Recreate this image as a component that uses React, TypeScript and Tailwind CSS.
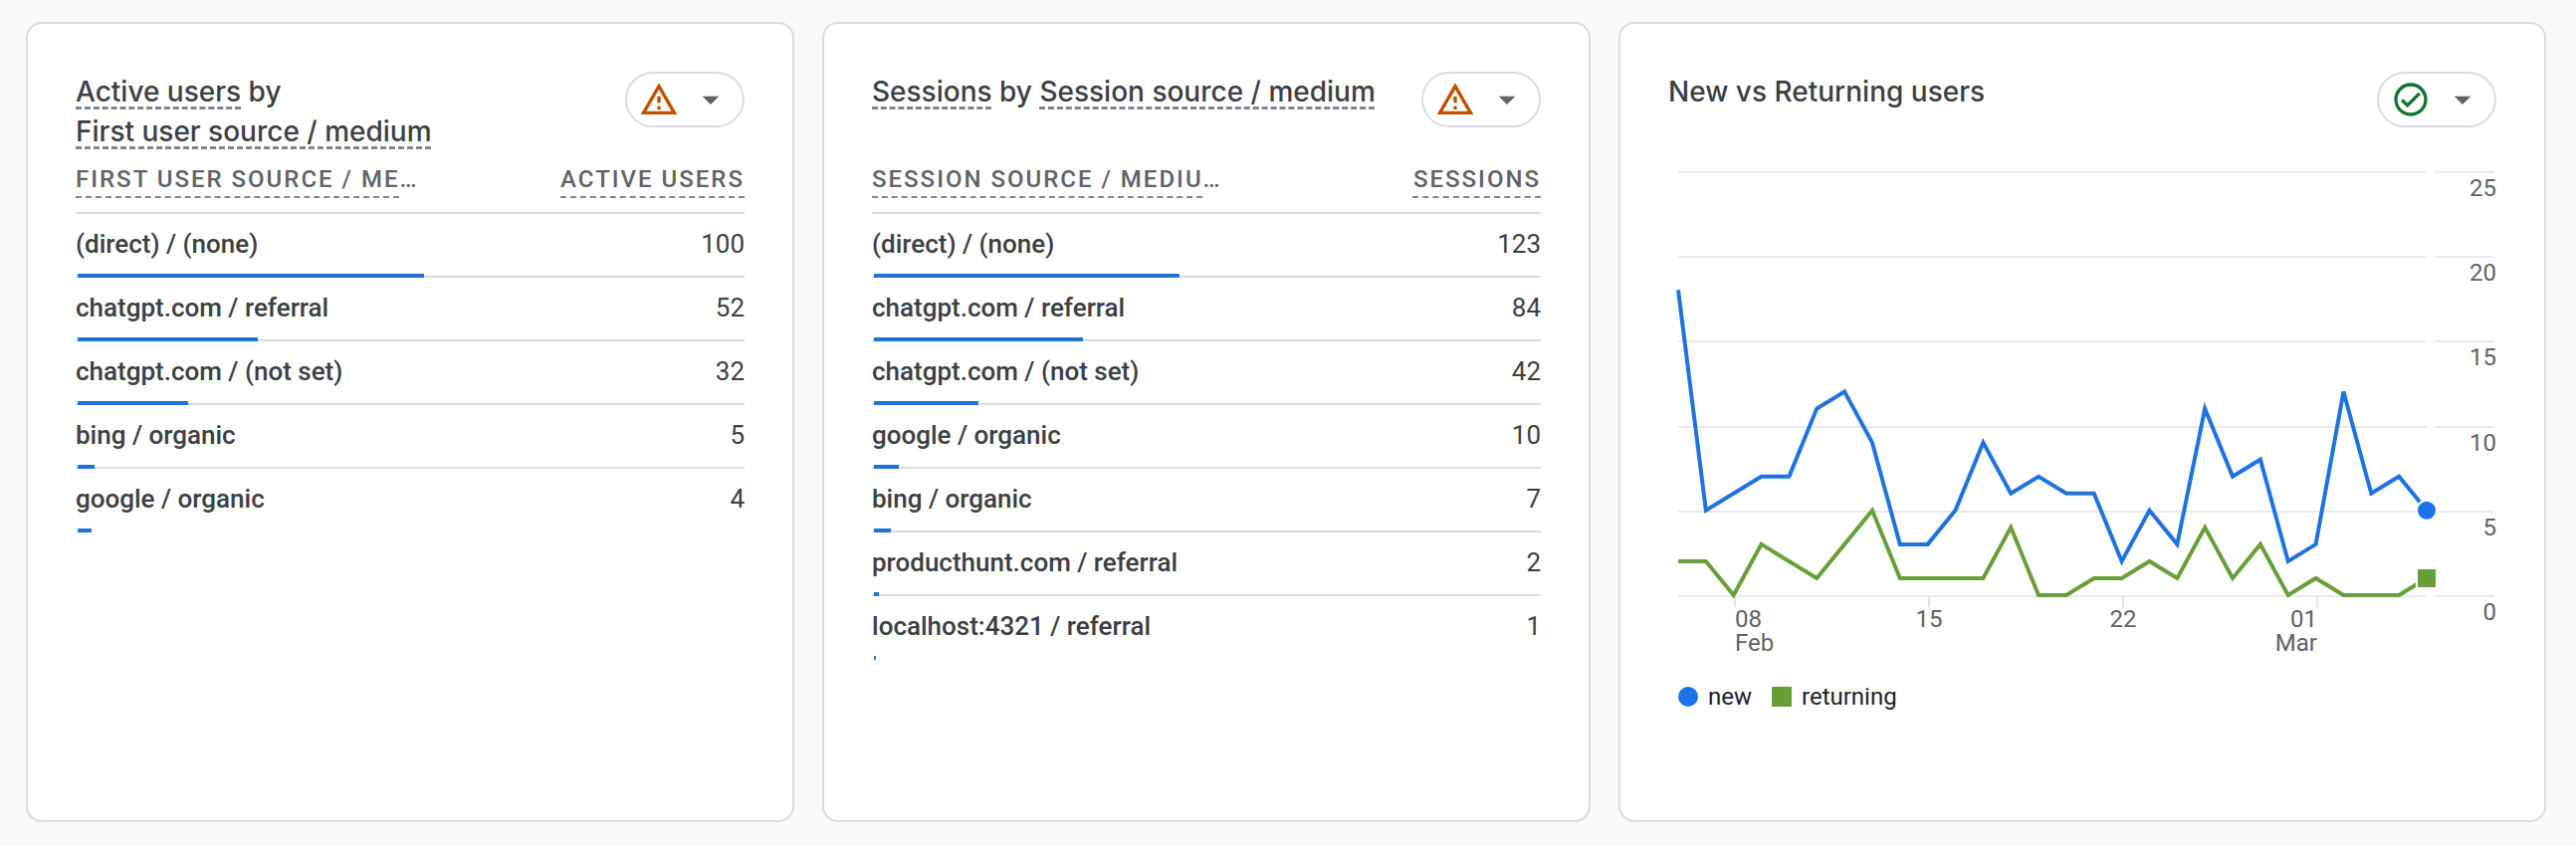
import type { ReactNode } from "react";

interface ISourceRow {
  source: string;
  count: number;
}

interface ISourceTableProps {
  sourceLabel: string;
  countLabel: string;
  rows: ISourceRow[];
}

const firstUserRows: ISourceRow[] = [
  { source: "(direct) / (none)", count: 100 },
  { source: "chatgpt.com / referral", count: 52 },
  { source: "chatgpt.com / (not set)", count: 32 },
  { source: "bing / organic", count: 5 },
  { source: "google / organic", count: 4 },
];

const sessionRows: ISourceRow[] = [
  { source: "(direct) / (none)", count: 123 },
  { source: "chatgpt.com / referral", count: 84 },
  { source: "chatgpt.com / (not set)", count: 42 },
  { source: "google / organic", count: 10 },
  { source: "bing / organic", count: 7 },
  { source: "producthunt.com / referral", count: 2 },
  { source: "localhost:4321 / referral", count: 1 },
];

// one value per day, 6 Feb to 5 Mar
const newUsers = [18, 5, 6, 7, 7, 11, 12, 9, 3, 3, 5, 9, 6, 7, 6, 6, 2, 5, 3, 11, 7, 8, 2, 3, 12, 6, 7, 5];
const returningUsers = [2, 2, 0, 3, 2, 1, 3, 5, 1, 1, 1, 1, 4, 0, 0, 1, 1, 2, 1, 4, 1, 3, 0, 1, 0, 0, 0, 1];

const PLOT_LEFT = 10;
const PLOT_RIGHT = 762;
const PLOT_TOP = 20;
const PLOT_BOTTOM = 446;
const Y_MAX = 25;

const xAt = (day: number) => PLOT_LEFT + (day * (PLOT_RIGHT - PLOT_LEFT)) / (newUsers.length - 1);
const yAt = (value: number) => PLOT_BOTTOM - (value * (PLOT_BOTTOM - PLOT_TOP)) / Y_MAX;
const toPoints = (values: number[]) => values.map((v, i) => `${xAt(i)},${yAt(v)}`).join(" ");

const WarningIcon = () => (
  <svg viewBox="0 0 24 24" className="size-10 fill-[#c05000]" aria-hidden="true">
    <path d="M12 5.99L19.53 19H4.47L12 5.99M12 2L1 21h22L12 2zm1 14h-2v2h2v-2zm0-6h-2v4h2v-4z" />
  </svg>
);

const CheckIcon = () => (
  <svg viewBox="0 0 24 24" className="size-10 fill-[#137333]" aria-hidden="true">
    <path d="M12 2C6.48 2 2 6.48 2 12s4.48 10 10 10 10-4.48 10-10S17.52 2 12 2zm0 18c-4.41 0-8-3.59-8-8s3.59-8 8-8 8 3.59 8 8-3.59 8-8 8zm4.59-12.42L10 14.17l-2.59-2.58L6 13l4 4 8-8-1.41-1.42z" />
  </svg>
);

const StatusButton = ({ label, icon }: { label: string; icon: ReactNode }) => (
  <button
    type="button"
    aria-label={label}
    className="flex h-14 shrink-0 cursor-pointer items-center gap-3 rounded-full border-2 border-[#dadce0] px-3"
  >
    {icon}
    <svg viewBox="0 0 24 24" className="size-10 fill-[#5f6368]" aria-hidden="true">
      <path d="M7 10l5 5 5-5z" />
    </svg>
  </button>
);

const Term = ({ children }: { children: ReactNode }) => (
  <span className="underline decoration-[#80868b] decoration-dashed decoration-[3px] underline-offset-[5px]">
    {children}
  </span>
);

const HeadTerm = ({ children }: { children: ReactNode }) => (
  <span className="underline decoration-[#80868b] decoration-dashed decoration-2 underline-offset-[10px]">
    {children}
  </span>
);

const Card = ({ title, status, children }: { title: ReactNode; status: ReactNode; children: ReactNode }) => (
  <section className="flex flex-col rounded-2xl border-2 border-[#dadce0] bg-white p-12">
    <div className="flex min-h-20 items-start justify-between gap-4">
      <h2 className="font-['Inter',sans-serif] text-[28px] leading-10 font-medium text-[#3c4043]">{title}</h2>
      {status}
    </div>
    {children}
  </section>
);

const SourceTable = ({ sourceLabel, countLabel, rows }: ISourceTableProps) => {
  const total = rows.reduce((sum, row) => sum + row.count, 0);
  return (
    <table className="w-full border-separate border-spacing-0 text-[#3c4043]">
      <thead>
        <tr className="h-[63px] text-2xl tracking-[2px] text-[#5f6368]">
          <th scope="col" className="border-b-2 border-[#dadce0] p-0 pb-1.5 text-left font-medium">
            <HeadTerm>{sourceLabel}</HeadTerm>…
          </th>
          <th scope="col" className="border-b-2 border-[#dadce0] p-0 pb-1.5 text-right font-medium">
            <HeadTerm>{countLabel}</HeadTerm>
          </th>
        </tr>
      </thead>
      <tbody className="text-[26px] leading-8">
        {rows.map((row) => (
          <tr key={row.source} className="group relative h-16">
            <td className="border-b-2 border-[#dadce0] p-0 pb-0.5 font-medium group-last:border-white">
              {row.source}
              <div
                className="absolute bottom-0 left-[2px] h-1 bg-[#2173d9]"
                style={{ width: `${(row.count / total) * 100}%` }}
              />
            </td>
            <td className="border-b-2 border-[#dadce0] p-0 pb-0.5 text-right group-last:border-white">
              {row.count}
            </td>
          </tr>
        ))}
      </tbody>
    </table>
  );
};

const UsersChart = () => {
  const last = newUsers.length - 1;
  return (
    <svg viewBox="0 0 832 520" className="w-full" role="img" aria-label="New and returning users per day">
      {[25, 20, 15, 10, 5, 0].map((value) => (
        <g key={value}>
          <path
            d={`M${PLOT_LEFT} ${Math.round(yAt(value)) + 1}H${PLOT_RIGHT}M770 ${Math.round(yAt(value)) + 1}h60`}
            className="stroke-[#e8eaed] stroke-2"
          />
          <text x={832} y={Math.round(yAt(value)) + 25} textAnchor="end" className="fill-[#5f6368] text-2xl">
            {value}
          </text>
        </g>
      ))}
      {[2, 9, 16, 23].map((day) => (
        <path key={day} d={`M${Math.round(xAt(day)) + 1} 448v10`} className="stroke-[#e0e2e5] stroke-2" />
      ))}
      <g className="fill-[#5f6368] text-2xl">
        <text x={67} y={478}>08</text>
        <text x={67} y={502}>Feb</text>
        <text x={262} y={478} textAnchor="middle">15</text>
        <text x={457} y={478} textAnchor="middle">22</text>
        <text x={652} y={478} textAnchor="end">01</text>
        <text x={652} y={502} textAnchor="end">Mar</text>
      </g>
      <polyline points={toPoints(newUsers)} className="fill-none stroke-[#1f73e0] stroke-4" />
      <polyline points={toPoints(returningUsers)} className="fill-none stroke-[#689f38] stroke-4" />
      <circle cx={xAt(last)} cy={yAt(5)} r={10} className="fill-[#1a73e8] stroke-white stroke-2" />
      <rect
        x={xAt(last) - 10}
        y={yAt(1) - 10}
        width={20}
        height={20}
        className="fill-[#689f38] stroke-white stroke-2"
      />
    </svg>
  );
};

export default function App() {
  return (
    <main className="grid min-h-screen grid-cols-[772fr_772fr_932fr] gap-7 bg-[#f8fafc] pt-[22px] pr-[30px] pb-6 pl-[26px] font-['Roboto',sans-serif]">
      <Card
        title={
          <>
            <Term>Active users</Term> by
            <br />
            <Term>First user source / medium</Term>
          </>
        }
        status={<StatusButton label="Data quality warning" icon={<WarningIcon />} />}
      >
        <SourceTable sourceLabel="FIRST USER SOURCE / ME" countLabel="ACTIVE USERS" rows={firstUserRows} />
      </Card>
      <Card
        title={
          <>
            <Term>Sessions</Term> by <Term>Session source / medium</Term>
          </>
        }
        status={<StatusButton label="Data quality warning" icon={<WarningIcon />} />}
      >
        <SourceTable sourceLabel="SESSION SOURCE / MEDIU" countLabel="SESSIONS" rows={sessionRows} />
      </Card>
      <Card
        title="New vs Returning users"
        status={<StatusButton label="Data quality good" icon={<CheckIcon />} />}
      >
        <UsersChart />
        <ul className="flex h-14 items-center gap-5 pl-[10px] text-2xl text-[#202124]">
          <li className="flex items-center gap-[10px]">
            <span className="size-5 rounded-full bg-[#1a73e8]" />
            new
          </li>
          <li className="flex items-center gap-[10px]">
            <span className="size-5 bg-[#689f38]" />
            returning
          </li>
        </ul>
      </Card>
    </main>
  );
}
